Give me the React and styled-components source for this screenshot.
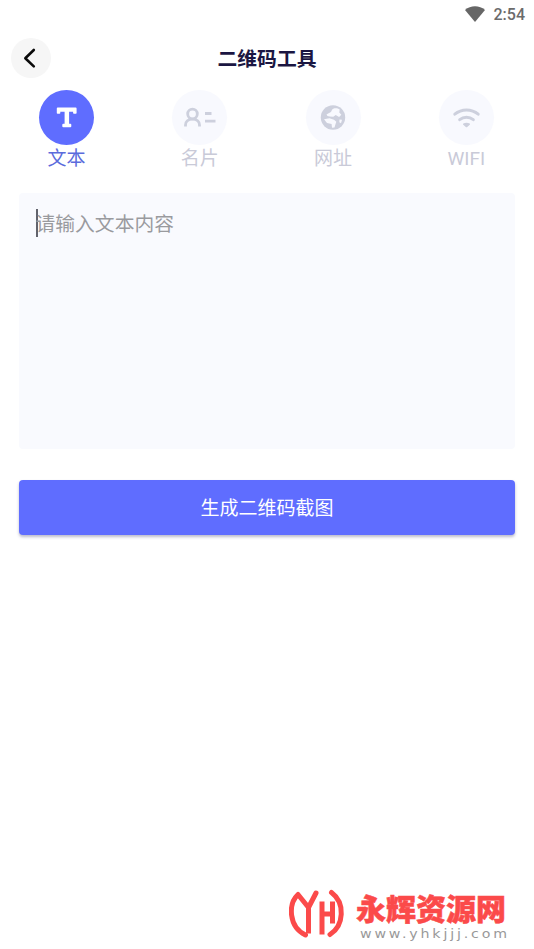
import styled, { createGlobalStyle } from "styled-components";

const GlobalStyle = createGlobalStyle`
  * {
    box-sizing: border-box;
  }
  body {
    margin: 0;
    background-color: #fff;
    font-family: Roboto, "Noto Sans CJK SC", sans-serif;
  }
`;

const Container = styled.div`
  width: 100%;
  height: 100vh;
  display: flex;
  flex-direction: column;
  overflow: hidden;
`;

const StatusBar = styled.div`
  height: 28px;
  padding-right: 9px;
  display: flex;
  align-items: center;
  justify-content: flex-end;
  gap: 8px;
`;

const Time = styled.span`
  padding-top: 2px;
  font-size: 16px;
  font-weight: 500;
  line-height: 26px;
  color: #6b6b6b;
`;

const Header = styled.header`
  height: 60px;
  padding: 0 11px;
  display: grid;
  grid-template-columns: 40px 1fr 40px;
  align-items: center;
`;

const BackButton = styled.button`
  width: 40px;
  height: 40px;
  padding: 0;
  border: none;
  border-radius: 50%;
  background-color: #f6f6f6;
  display: flex;
  align-items: center;
  justify-content: center;
  cursor: pointer;
`;

const Title = styled.h1`
  margin: 0;
  padding-top: 4px;
  font-size: 19.8px;
  font-weight: bold;
  line-height: 30px;
  text-align: center;
  color: #1b1642;
`;

const Tabs = styled.nav`
  display: grid;
  grid-template-columns: repeat(4, 1fr);
  padding: 2px 1px 0 0;
`;

const Tab = styled.div`
  display: flex;
  flex-direction: column;
  align-items: center;
  font-size: 19px;
  line-height: 28px;
  color: ${(props) => (props.$active ? "#5b6bdc" : "#c9cad8")};
`;

const TabIcon = styled.div`
  width: 55px;
  height: 55px;
  border-radius: 50%;
  display: flex;
  align-items: center;
  justify-content: center;
  color: ${(props) => (props.$active ? "#fff" : "#cdd0dd")};
  background-color: ${(props) => (props.$active ? "#5f6dff" : "#f8f9fe")};
`;

const Form = styled.div`
  padding: 20px 19px 0;
  display: flex;
  flex-direction: column;
  gap: 31px;
`;

const TextBox = styled.div`
  height: 256px;
  padding: 16px 17px;
  border-radius: 4px;
  background-color: #f9fafe;
  display: flex;
  align-items: flex-start;
`;

const Caret = styled.span`
  width: 2px;
  height: 28px;
  margin-right: -2.5px;
  background-color: #62636c;
`;

const Placeholder = styled.span`
  padding-top: 2px;
  font-size: 19.8px;
  line-height: 28px;
  color: #999a9e;
`;

const Button = styled.button`
  height: 55px;
  padding: 0 0 2px;
  border: none;
  border-radius: 4px;
  background-color: #5f6dff;
  box-shadow: 0 2px 3px rgba(60, 60, 110, 0.35);
  font-family: inherit;
  font-size: 19px;
  color: #fff;
  cursor: pointer;
`;

const Footer = styled.footer`
  height: 60px;
  margin-top: auto;
  padding-right: 26px;
  display: flex;
  justify-content: flex-end;
  align-items: flex-start;
  gap: 10px;
`;

const Brand = styled.div`
  width: 152px;
  padding-top: 4px;
  display: flex;
  flex-direction: column;
`;

const BrandName = styled.span`
  font-size: 30px;
  font-weight: 900;
  line-height: 34px;
  white-space: nowrap;
  color: #fb4a4a;
  -webkit-text-stroke: 0.5px #fb4a4a;
`;

const BrandUrl = styled.span`
  padding-left: 4px;
  font-family: "DejaVu Sans", sans-serif;
  font-size: 13px;
  line-height: 14px;
  letter-spacing: 2.6px;
  white-space: nowrap;
  color: #999;
  transform: scaleX(1.09);
  transform-origin: 4px 50%;
`;

const SignalIcon = () => (
  <svg width="21" height="16" viewBox="0 0 21 16">
    <path d="M10 16 0 4C5.600-.9 14.400-.9 20 4Z" fill="#666" />
  </svg>
);

const BackIcon = () => (
  <svg width="40" height="40" viewBox="0 0 40 40" fill="none">
    <path
      d="M22.800 12 14.300 20.200l8.500 8.200"
      stroke="#0a0a0a"
      strokeWidth="2.600"
      strokeLinecap="round"
      strokeLinejoin="round"
    />
  </svg>
);

const TextIcon = () => (
  <svg width="55" height="55" viewBox="0 0 55 55" fill="currentColor">
    <path d="M18.700 17.500h17.900a1 1 0 0 1 1 1v4.500a.8.8 0 0 1-.8.8h-1.900a.8.8 0 0 1-.8-.8v-1.300H30.100v12.100h1.200a1 1 0 0 1 1 1v1.500a1 1 0 0 1-1 1h-7a1 1 0 0 1-1-1v-1.500a1 1 0 0 1 1-1h1.300V21.700h-4.300V23a.8.8 0 0 1-.8.8h-1.900a.8.8 0 0 1-.8-.8v-4.500a1 1 0 0 1 .9-1z" />
  </svg>
);

const CardIcon = () => (
  <svg
    width="55"
    height="55"
    viewBox="0 0 55 55"
    fill="none"
    stroke="currentColor"
    strokeWidth="2.800"
  >
    <circle cx="20.500" cy="24" r="4.800" />
    <path d="M13.500 36.500v-1.500c0-3.500 2.600-5.900 7-5.900s7 2.400 7 5.900v1.500" />
    <path d="M33 23.500h6.500M33 31.200h10.500" />
  </svg>
);

const GlobeIcon = () => (
  <svg width="55" height="55" viewBox="0 0 55 55">
    <circle cx="27" cy="27.500" r="12.200" fill="currentColor" />
    <path
      d="M20.500 24.500c1.600-.8 2.700-1.500 4-2.200 1.500-.9.800-2.700 2.800-3.600 2.300-.9 4.600-.4 6.400.9l-.4 2.800 2 2.400-2.200 2.200-3.400-2-2.400 1.700-3.600-.2-2.200-.6z"
      fill="#f8f9fe"
    />
    <path
      d="m18 29.200 5.400-1 4.600 1.600 2.300 2-.9 2.700-.9 3-2.500.2-.4-3.600-4.600-1z M33.500 29.500l2.500.2-1 3.500-1.700-1z"
      fill="#f8f9fe"
    />
  </svg>
);

const WifiIcon = () => (
  <svg width="55" height="55" viewBox="0 0 55 55" fill="none">
    <path
      d="M15.800 24.200c6.700-5.600 16.700-5.600 23.400 0M20.700 29.700c4-3.200 9.600-3.200 13.600 0"
      stroke="currentColor"
      strokeWidth="3"
      strokeLinecap="round"
    />
    <path
      d="M24.700 34.200c1.800-1.100 3.800-1.100 5.600 0l-2.800 2.400z"
      fill="currentColor"
      stroke="currentColor"
      strokeWidth="1.400"
      strokeLinejoin="round"
    />
  </svg>
);

const BrandLogo = () => (
  <svg
    width="57"
    height="50"
    viewBox="0 0 57 50"
    fill="none"
    stroke="#fb4a4a"
    strokeWidth="5"
  >
    <path
      d="M16.500 46C-.5 38 -1 15 9 5.500L19.500 18.500 27 4"
      strokeLinecap="round"
      strokeLinejoin="round"
    />
    <path d="M19.500 17v27.500M33 12.500v33M43.500 12.500v22M33 25h10.500" />
    <path d="M42.500 3.500C56.500 14 55 36.500 41 45.500" strokeLinecap="round" />
  </svg>
);

const tabs = [
  { label: "文本", Icon: TextIcon },
  { label: "名片", Icon: CardIcon },
  { label: "网址", Icon: GlobeIcon },
  { label: "WIFI", Icon: WifiIcon },
];

const App = () => {
  return (
    <Container>
      <GlobalStyle />
      <StatusBar>
        <SignalIcon />
        <Time>2:54</Time>
      </StatusBar>
      <Header>
        <BackButton aria-label="返回">
          <BackIcon />
        </BackButton>
        <Title>二维码工具</Title>
      </Header>
      <Tabs>
        {tabs.map(({ label, Icon }, index) => (
          <Tab key={label} $active={index === 0}>
            <TabIcon $active={index === 0}>
              <Icon />
            </TabIcon>
            {label}
          </Tab>
        ))}
      </Tabs>
      <Form>
        <TextBox>
          <Caret />
          <Placeholder>请输入文本内容</Placeholder>
        </TextBox>
        <Button>生成二维码截图</Button>
      </Form>
      <Footer>
        <BrandLogo />
        <Brand>
          <BrandName>永辉资源网</BrandName>
          <BrandUrl>www.yhkjjj.com</BrandUrl>
        </Brand>
      </Footer>
    </Container>
  );
};

export default App;
